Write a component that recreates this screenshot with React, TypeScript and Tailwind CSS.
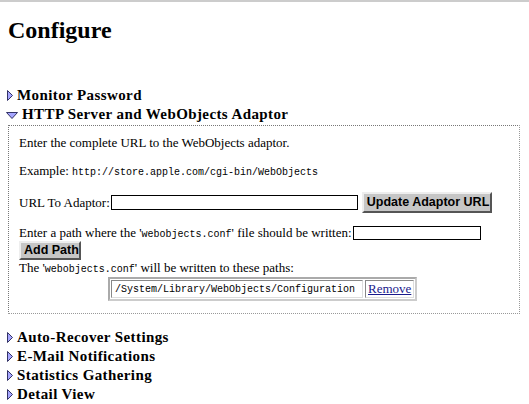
import React from "react";

const serif = "font-['Liberation_Serif','Times_New_Roman',serif]";
const mono = "font-['Liberation_Mono','Courier_New',monospace]";
const sans = "font-['Liberation_Sans',Arial,sans-serif]";

// Collapsed / expanded disclosure triangles
const Disclosure = ({ open }: { open?: boolean }) =>
  open ? (
    <svg width="12" height="7" viewBox="0 0 12 7" className="-ml-[2px] mr-[4px] mt-[2px] shrink-0">
      <polygon points="0.5,0.5 11.5,0.5 6,6.5" fill="#a6a6ff" stroke="#333366" strokeWidth="1" />
    </svg>
  ) : (
    <svg width="6" height="11" viewBox="0 0 6 11" className="-ml-[1px] mr-[4px] shrink-0">
      <polygon points="0.5,0.5 5.5,5.5 0.5,10.5" fill="#a6a6ff" stroke="#333366" strokeWidth="1" />
    </svg>
  );

const Section = ({ title, open }: { title: string; open?: boolean }) => (
  <div className={`flex items-center h-[19px] ${serif} text-[15px] font-bold text-black tracking-[0.4px] whitespace-nowrap`}>
    <Disclosure open={open} />
    <span>{title}</span>
  </div>
);

const Button = ({ children, className = "" }: { children: React.ReactNode; className?: string }) => (
  <button
    type="button"
    className={`${sans} font-bold text-[12.5px] text-black bg-[#c6c6c6] border-2 border-t-[#eeeeee] border-l-[#eeeeee] border-r-[#555555] border-b-[#555555] px-[3px] leading-none whitespace-nowrap ${className}`}
  >
    {children}
  </button>
);

export default function App() {
  return (
    <div className={`w-[529px] h-[404px] bg-white overflow-hidden ${serif} text-black`}>
      {/* top rule */}
      <div className="h-[2px] bg-[#cccccc]" />

      <div className="px-[8px]">
        <h1 className="text-[24px] font-bold mt-[14px] leading-[28px]">Configure</h1>

        <div className="mt-[42px]">
          <Section title="Monitor Password" />
          <Section title="HTTP Server and WebObjects Adaptor" open />
        </div>

        {/* Expanded panel */}
        <div className="mt-[1px] w-[512px] border-t border-l border-dotted border-t-[#777777] border-l-[#777777] border-r border-b border-r-[#999999] border-b-[#999999] pl-[10px] pt-[9px] pb-[12px] text-[13px]">
          <p className="leading-[16px]">Enter the complete URL to the WebObjects adaptor.</p>
          <p className="leading-[16px] mt-[12px]">
            Example: <span className={`${mono} text-[10px]`}>http://store.apple.com/cgi-bin/WebObjects</span>
          </p>

          <div className="flex items-center h-[21px] mt-[11px]">
            <span className="mr-[1px]">URL To Adaptor:</span>
            <input className="w-[247px] h-[15px] border border-black bg-white outline-none" />
            <Button className="ml-[4px] h-[21px] w-[130px]">Update Adaptor URL</Button>
          </div>

          <div className="flex items-center h-[16px] mt-[12px]">
            <span className="mr-[1px]">
              Enter a path where the '<span className={`${mono} text-[10px]`}>webobjects.conf</span>' file should be written:
            </span>
            <input className="w-[128px] h-[14px] border border-black bg-white outline-none" />
          </div>

          <Button className="h-[19px] w-[62px] block">Add Path</Button>

          <p className="leading-[15px]">
            The '<span className={`${mono} text-[10px]`}>webobjects.conf</span>' will be written to these paths:
          </p>

          <div className="ml-[89px] w-[309px] h-[24px] flex border-2 border-t-[#aaaaaa] border-l-[#aaaaaa] border-r-[#cccccc] border-b-[#cccccc] p-[1px] gap-[2px]">
            <div className={`flex items-center w-[252px] border border-t-[#888888] border-l-[#888888] border-r-[#dddddd] border-b-[#dddddd] pl-[3px] ${mono} text-[10px]`}>
              /System/Library/WebObjects/Configuration
            </div>
            <div className="flex items-center flex-1 border border-t-[#888888] border-l-[#888888] border-r-[#dddddd] border-b-[#dddddd] pl-[2px]">
              <a href="#" className="text-[#1a1a8c] underline text-[13px]">Remove</a>
            </div>
          </div>
        </div>

        <div className="mt-[14px]">
          <Section title="Auto-Recover Settings" />
          <Section title="E-Mail Notifications" />
          <Section title="Statistics Gathering" />
          <Section title="Detail View" />
        </div>
      </div>
    </div>
  );
}
